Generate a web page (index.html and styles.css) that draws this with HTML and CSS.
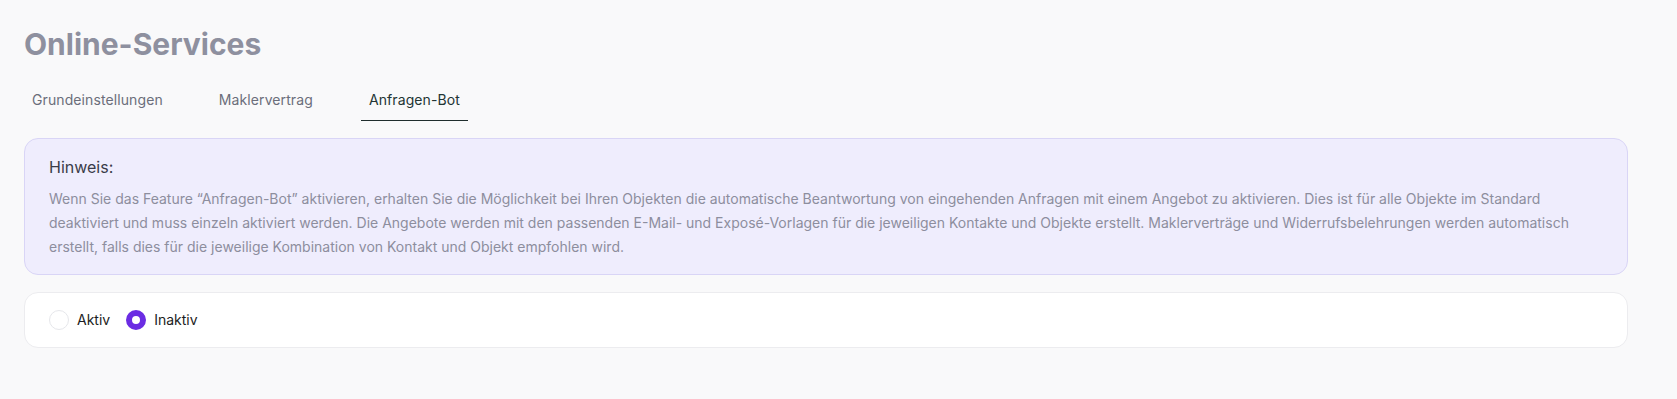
FILE: index.html
```html
<!DOCTYPE html>
<html lang="de">
<head>
    <meta charset="UTF-8">
    <meta name="viewport" content="width=device-width, initial-scale=1.0">
    <title>Online-Services</title>
    <link rel="stylesheet" href="styles.css">
</head>
<body>
    <div class="page">
        <h1 class="title">Online-Services</h1>

        <!-- Tabs -->
        <nav class="tabs">
            <a class="tab" href="#">Grundeinstellungen</a>
            <a class="tab" href="#">Maklervertrag</a>
            <a class="tab active" href="#">Anfragen-Bot</a>
        </nav>

        <div class="notice">
            <div class="notice-title">Hinweis:</div>
            <p class="notice-text">Wenn Sie das Feature “Anfragen-Bot” aktivieren, erhalten Sie die Möglichkeit bei Ihren Objekten die automatische Beantwortung von eingehenden Anfragen mit einem Angebot zu aktivieren. Dies ist für alle Objekte im Standard deaktiviert und muss einzeln aktiviert werden. Die Angebote werden mit den passenden E-Mail- und Exposé-Vorlagen für die jeweiligen Kontakte und Objekte erstellt. Maklerverträge und Widerrufsbelehrungen werden automatisch erstellt, falls dies für die jeweilige Kombination von Kontakt und Objekt empfohlen wird.</p>
        </div>

        <div class="card">
            <label class="radio">
                <input type="radio" name="bot" value="aktiv">
                <span class="dot"></span>
                Aktiv
            </label>
            <label class="radio">
                <input type="radio" name="bot" value="inaktiv" checked>
                <span class="dot"></span>
                Inaktiv
            </label>
        </div>
    </div>
</body>
</html>
```

FILE: styles.css
```css
body {
    margin: 0;
    background: #f9f9fa;
    font-family: Inter, "Noto Sans", sans-serif;
}

.page {
    padding: 24px 49px 24px 24px;
}

.title {
    margin: 0 0 16px;
    font-size: 30px;
    line-height: 40px;
    font-weight: 700;
    color: #8e909f;
}

.tabs {
    display: flex;
    gap: 40px;
    margin-bottom: 17px;
}

.tab {
    padding: 10px 8px;
    font-size: 14px;
    line-height: 20px;
    letter-spacing: 0.1px;
    color: #6b6e7a;
    text-decoration: none;
    border-bottom: 1.5px solid transparent;
}

.tab.active {
    color: #233534;
    border-bottom-color: #1f2d2d;
}

.notice {
    padding: 16px 24px 15px;
    background: #efedfd;
    border: 1px solid #d9d5f6;
    border-radius: 14px;
}

.notice-title {
    font-size: 16px;
    line-height: 24px;
    color: #3a3c49;
}

.notice-text {
    margin: 8px 0 0;
    font-size: 14px;
    line-height: 24px;
    color: #8d8e9e;
}

.card {
    display: flex;
    align-items: center;
    gap: 16px;
    margin-top: 17px;
    padding: 17px 24px;
    background: #fff;
    border: 1px solid #ececef;
    border-radius: 14px;
}

.radio {
    display: flex;
    align-items: center;
    gap: 8px;
    font-size: 14px;
    line-height: 20px;
    color: #1c1c22;
    cursor: pointer;
}

.radio input {
    display: none;
}

.dot {
    box-sizing: border-box;
    width: 20px;
    height: 20px;
    border-radius: 50%;
    background: #fff;
    border: 1px solid #e6e7eb;
}

.radio input:checked + .dot {
    border: 6px solid #6b2ce3;
}
```
